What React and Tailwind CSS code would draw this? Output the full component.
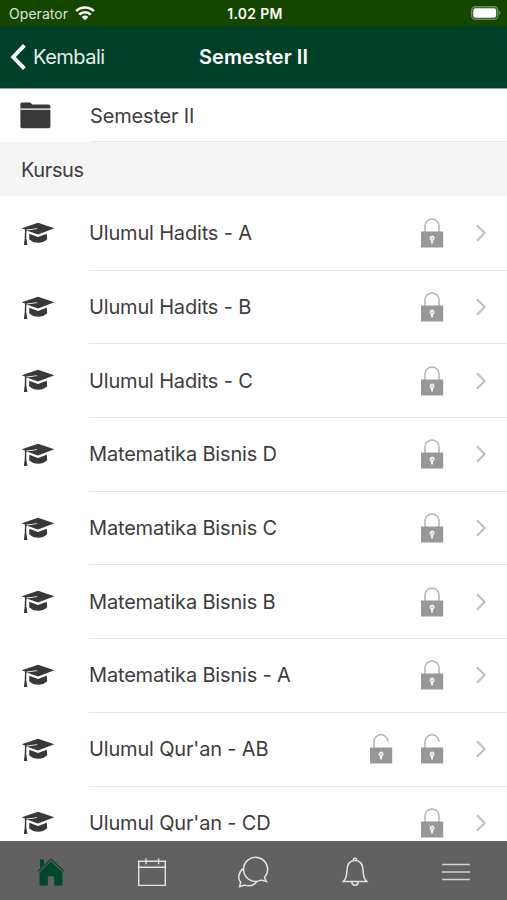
import React from "react";

const courses = [
  { id: 1, name: "Ulumul Hadits - A", locks: ["closed"] },
  { id: 2, name: "Ulumul Hadits - B", locks: ["closed"] },
  { id: 3, name: "Ulumul Hadits - C", locks: ["closed"] },
  { id: 4, name: "Matematika Bisnis D", locks: ["closed"] },
  { id: 5, name: "Matematika Bisnis C", locks: ["closed"] },
  { id: 6, name: "Matematika Bisnis B", locks: ["closed"] },
  { id: 7, name: "Matematika Bisnis - A", locks: ["closed"] },
  { id: 8, name: "Ulumul Qur'an - AB", locks: ["open", "open"] },
  { id: 9, name: "Ulumul Qur'an - CD", locks: ["closed"] },
];

// --- Icons ---
const WifiIcon = () => (
  <svg width="20" height="15" viewBox="0 0 20 15" fill="none" stroke="#fff" strokeWidth="2.5">
    <path d="M1.2 5.2a12.4 12.4 0 0 1 17.6 0" />
    <path d="M4.3 8.6a8 8 0 0 1 11.4 0" />
    <path d="M10 14.2 6.7 10.9a4.7 4.7 0 0 1 6.6 0z" fill="#fff" stroke="none" />
  </svg>
);

const BatteryIcon = () => (
  <svg width="30" height="14" viewBox="0 0 30 14">
    <rect x="0.7" y="0.7" width="26" height="12.6" rx="3.6" fill="none" stroke="#6d8c61" strokeWidth="1.4" />
    <rect x="2.2" y="2.2" width="23" height="9.6" rx="2.2" fill="#fff" />
    <path d="M28 4.6c1.8.8 1.8 4 0 4.8z" fill="#6d8c61" />
  </svg>
);

const BackIcon = () => (
  <svg width="16" height="26" viewBox="0 0 16 26" fill="none" stroke="#fff" strokeWidth="3.9">
    <path d="M14.4 1.4 3.2 13l11.2 11.6" />
  </svg>
);

const FolderIcon = () => (
  <svg width="31" height="27" viewBox="0 0 31 27" fill="#383838">
    <path d="M.4 6.6V2Q.4.5 2 .5h7.8q.9 0 1.4.8l.8 1.1h16.4q2 0 2 2v2.2z" />
    <path d="M.4 7.8h30v16.7q0 1.8-1.8 1.8H2.2Q.4 26.3.4 24.5z" />
  </svg>
);

const CapIcon = () => (
  <svg width="34" height="24" viewBox="0 0 34 24" fill="#383838">
    <path d="M17 .8 33.300 6.300 17 12.400 5.600 8.400l10.600-1.300-.2-.9L4.300 7.700.8 6.300z" />
    <path d="M4 7.100 6.100 8 5.300 9.600v6.600l1.100 6.800H2.900l.8-6.800z" />
    <path d="M8.300 11.800 17 14.900l8.800-3.100.4 5.500c-2.600 2.500-5.700 3.500-9 3.500s-6.500-1-9-3.500z" />
  </svg>
);

const LockIcon = ({ open }) => (
  <svg width="24" height="30" viewBox="0 0 24 30">
    <path
      d={open ? "M5 14V7.600a7 7 0 0 1 13.800-1.500l.2 1.700" : "M5 14V8a7 7 0 0 1 14 0v6"}
      fill="none"
      stroke="#b4b4b4"
      strokeWidth="1.5"
    />
    <path d="M1 13.500h22.200v16H1z" fill="#989898" />
    <path d="M9.600 20.200a2.500 2.500 0 1 1 3.700 2.100l-.4 3.300h-1.700l-.4-3.300a2.500 2.500 0 0 1-1.200-2.100z" fill="#f2f2f2" />
    <circle cx="12.100" cy="20.200" r=".8" fill="#989898" />
  </svg>
);

const ChevronIcon = () => (
  <svg width="12" height="18" viewBox="0 0 12 18" fill="none" stroke="#c2c2c2" strokeWidth="2.3">
    <path d="m2 1.300 7.600 7.700L2 16.700" />
  </svg>
);

const HomeIcon = () => (
  <svg width="30" height="30" viewBox="0 0 30 30" fill="#00472b">
    <path d="M4 2.500h4v4.800L4 11z" />
    <path d="M1.800 14.500 15 2.100l13.200 12.400" fill="none" stroke="#00472b" strokeWidth="1.3" />
    <path d="m15 4.500 11.500 10.700V28.500h-8.300v-9.300h-6.400v9.300H3.600V15.200z" />
  </svg>
);

const CalendarIcon = () => (
  <svg width="30" height="30" viewBox="0 0 30 30" fill="none" stroke="#e4e4e4" strokeWidth="1.4">
    <path d="M1.700 4.200h26.600v24.200H1.700zM1.700 10.200h26.600M9 1.500v5.700M21.600 1.500v5.700" />
  </svg>
);

const ChatIcon = () => (
  <svg width="32" height="32" viewBox="0 0 32 32" fill="none" stroke="#e4e4e4" strokeWidth="1.5">
    <path d="M27.600 21.300A12 12 0 1 0 24 24.100l5.500 1.500q-1.400-2-1.900-4.300z" />
    <path d="M6 12.700C1 16.800.8 23 3.600 26l-.9 4.700 5-1.600c4.900 1.300 9.700.4 12-3.800" />
  </svg>
);

const BellIcon = () => (
  <svg width="28" height="30" viewBox="0 0 28 30" fill="none" stroke="#e4e4e4" strokeWidth="1.5">
    <path d="M2.400 24.400c3.200-3 3.400-5.800 3.500-10.300C6 7.300 8.800 3.400 14 3.400s8 3.900 8.100 10.700c.1 4.500.3 7.300 3.500 10.300z" />
    <path d="M12.300 3c0-2.200 3.400-2.200 3.400 0M10.800 24.500c0 5 6.400 5 6.400 0" />
  </svg>
);

const MenuIcon = () => (
  <svg width="28" height="18" viewBox="0 0 28 18" stroke="#d2d2d2" strokeWidth="1.6">
    <path d="M0 1.500h28M0 9h28M0 16.500h28" />
  </svg>
);

function CourseRow({ course }) {
  return (
    <li className="flex h-[73.7px] shrink-0 items-center pl-[21px]">
      <span className="w-[68px] shrink-0">
        <CapIcon />
      </span>
      <div className="flex h-full flex-1 items-center border-b border-[#e6e6e6] pr-5">
        <span className="flex-1 whitespace-nowrap">{course.name}</span>
        <div className="flex gap-[27px]">
          {course.locks.map((lock, i) => (
            <LockIcon key={i} open={lock === "open"} />
          ))}
        </div>
        <span className="ml-[31px]">
          <ChevronIcon />
        </span>
      </div>
    </li>
  );
}

function App() {
  return (
    <div className="flex h-[900px] w-[507px] flex-col overflow-hidden bg-white font-['Inter',sans-serif] text-[20px] tracking-[-0.17px] text-[#3d3d3d]">
      {/* Status bar */}
      <div className="grid h-[26px] shrink-0 grid-cols-3 items-center bg-[#154600] pr-[6px] pl-[9px] text-[14px] text-white">
        <div className="flex items-center gap-[7px] text-[#dce6d8]">
          <span className="tracking-[0.05px]">Operator</span>
          <WifiIcon />
        </div>
        <span className="text-center font-semibold tracking-[0.3px]">1.02 PM</span>
        <div className="flex justify-end">
          <BatteryIcon />
        </div>
      </div>

      {/* Navigation bar */}
      <header className="grid h-[63px] shrink-0 grid-cols-3 items-center border-b border-[#8ba69b] bg-[#004029] px-[10px] text-white">
        <button className="flex items-center gap-[7px] text-[#e5eeea]">
          <BackIcon />
          <span className="tracking-[-0.5px]">Kembali</span>
        </button>
        <h1 className="text-center font-semibold tracking-[0.05px] whitespace-nowrap">Semester II</h1>
      </header>

      <main className="flex min-h-0 flex-1 flex-col overflow-hidden">
        <div className="flex h-[53px] shrink-0 items-center pl-5">
          <span className="w-[70px] shrink-0">
            <FolderIcon />
          </span>
          <div className="flex h-full flex-1 items-center border-b border-[#e6e6e6] pt-px">
            Semester II
          </div>
        </div>
        <h2 className="flex h-[54px] shrink-0 items-center bg-[#f5f5f5] pt-[2px] pl-[21px] tracking-[-0.4px]">
          Kursus
        </h2>
        <ul className="flex flex-col pt-px">
          {courses.map((course) => (
            <CourseRow key={course.id} course={course} />
          ))}
        </ul>
      </main>

      {/* Tab bar */}
      <nav className="grid h-[59px] shrink-0 grid-cols-5 place-items-center bg-[#616161] pt-[3px]">
        <HomeIcon />
        <CalendarIcon />
        <ChatIcon />
        <BellIcon />
        <MenuIcon />
      </nav>
    </div>
  );
}

export default App;
